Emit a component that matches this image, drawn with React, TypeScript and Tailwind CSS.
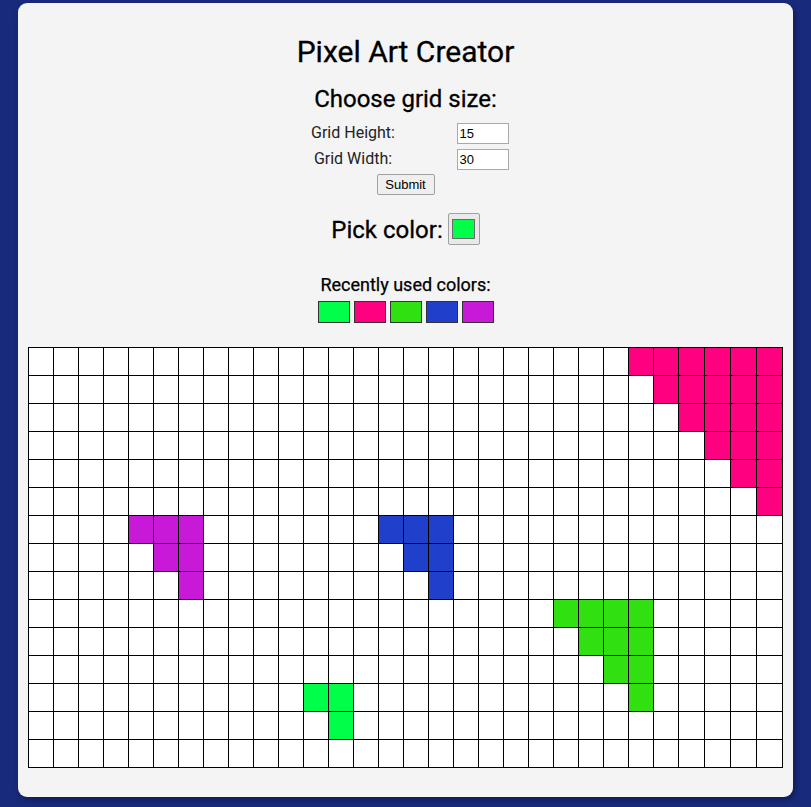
const ROWS = 15;
const COLS = 30;

const PINK = "#ff0080";
const PURPLE = "#c818d8";
const BLUE = "#2040cc";
const GREEN = "#30e010";
const LIME = "#00ff48";

// painted cells: [row, col, color]
const painted: [number, number, string][] = [];
function paintRun(row: number, from: number, to: number, color: string) {
  for (let c = from; c <= to; c++) painted.push([row, c, color]);
}
paintRun(0, 24, 29, PINK);
paintRun(1, 25, 29, PINK);
paintRun(2, 26, 29, PINK);
paintRun(3, 27, 29, PINK);
paintRun(4, 28, 29, PINK);
paintRun(5, 29, 29, PINK);
paintRun(6, 4, 6, PURPLE);
paintRun(7, 5, 6, PURPLE);
paintRun(8, 6, 6, PURPLE);
paintRun(6, 14, 16, BLUE);
paintRun(7, 15, 16, BLUE);
paintRun(8, 16, 16, BLUE);
paintRun(9, 21, 24, GREEN);
paintRun(10, 22, 24, GREEN);
paintRun(11, 23, 24, GREEN);
paintRun(12, 24, 24, GREEN);
paintRun(12, 11, 12, LIME);
paintRun(13, 12, 12, LIME);

const cellColor = new Map<string, string>();
painted.forEach(([r, c, col]) => cellColor.set(`${r}-${c}`, col));

const RECENT = [LIME, PINK, GREEN, BLUE, PURPLE];

function SizeRow({ label, value }: { label: string; value: string }) {
  return (
    <div className="flex h-[26px] w-[232px] items-center">
      <div className="w-[127px] text-center text-[16px] text-[#222]">{label}</div>
      <input
        readOnly
        value={value}
        className="ml-[40px] h-[21px] w-[52px] border border-[#a9a9a9] bg-white px-[2px] font-['Liberation_Sans',Arial,sans-serif] text-[13px] text-black outline-none"
      />
    </div>
  );
}

function PixelGrid() {
  const cells = [];
  for (let r = 0; r < ROWS; r++) {
    for (let c = 0; c < COLS; c++) {
      const color = cellColor.get(`${r}-${c}`) ?? "#ffffff";
      cells.push(<div key={`${r}-${c}`} className="h-[27px]" style={{ background: color }} />);
    }
  }
  return (
    <div className="grid w-[755px] grid-cols-[repeat(26,24px)_repeat(4,25px)] gap-px bg-black p-px">
      {cells}
    </div>
  );
}

export default function App() {
  return (
    <div className="min-h-[807px] bg-[#182a7c] px-[18px] pb-[10px] pt-[3px] font-['Roboto',sans-serif]">
      <div className="flex flex-col items-center rounded-[9px] bg-[#f4f4f4] px-[10px] pb-[29px] pt-[32px] shadow-[2px_3px_6px_rgba(0,0,0,0.35)]">
        <h1 className="text-[30px] leading-[34px] text-black [-webkit-text-stroke:0.3px_black]">Pixel Art Creator</h1>
        <h2 className="mt-[16px] text-[24px] leading-[28px] text-black [-webkit-text-stroke:0.3px_black]">Choose grid size:</h2>

        <div className="mt-[7px] flex flex-col">
          <SizeRow label="Grid Height:" value="15" />
          <SizeRow label="Grid Width:" value="30" />
        </div>

        <button className="mt-[2px] h-[21px] w-[58px] rounded-[2px] border border-[#a0a0a0] bg-[#efefef] font-['Liberation_Sans',Arial,sans-serif] text-[13px] text-black">
          Submit
        </button>

        <div className="mt-[18px] flex items-start gap-[5px]">
          <span className="text-[24px] leading-[34px] text-black [-webkit-text-stroke:0.3px_black]">Pick color:</span>
          <div className="flex h-[32px] w-[32px] items-center justify-center rounded-[2px] border border-[#a0a0a0] bg-[#e9e9e9]">
            <div className="h-[20px] w-[23px] border border-[#6b6b6b] bg-[#00ff48]" />
          </div>
        </div>

        <div className="mt-[27px] text-[18px] leading-[22px] text-black [-webkit-text-stroke:0.25px_black]">Recently used colors:</div>
        <div className="mt-[5px] flex gap-[4px]">
          {RECENT.map((c, i) => (
            <div key={i} className="h-[22px] w-[32px] border border-[#333]" style={{ background: c }} />
          ))}
        </div>

        <div className="mt-[24px]">
          <PixelGrid />
        </div>
      </div>
    </div>
  );
}
